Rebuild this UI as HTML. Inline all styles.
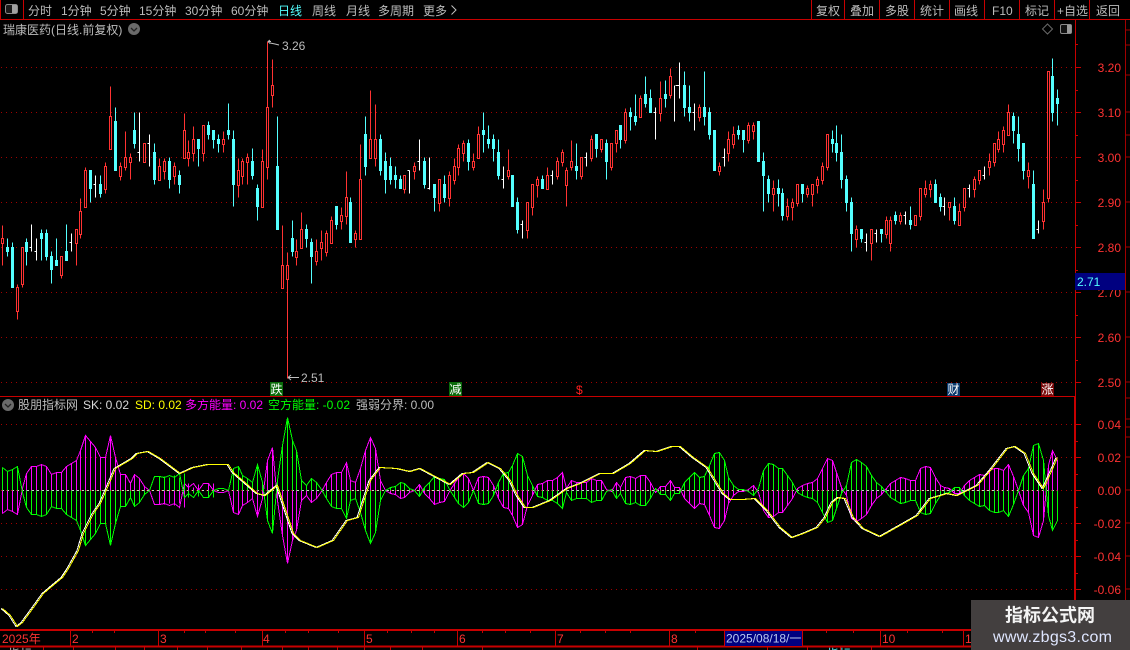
<!DOCTYPE html>
<html><head><meta charset="utf-8"><style>
html,body{margin:0;padding:0;background:#000;width:1130px;height:650px;overflow:hidden}
svg{display:block}
text{font-family:"Liberation Sans","Noto Sans CJK SC",sans-serif;font-size:12px;fill:#bcbcbc}
.r{fill:#ff3232;text-anchor:end}
.a{fill:#ff3232}
</style></head><body>
<svg width="1130" height="650" viewBox="0 0 1130 650" xmlns="http://www.w3.org/2000/svg">
<rect width="1130" height="650" fill="#000"/>
<g shape-rendering="crispEdges">
<!-- grid -->
<path stroke="#a00000" stroke-dasharray="1 4" fill="none" d="M1 67.5H1075M1 112.5H1075M1 157.5H1075M1 202.5H1075M1 247.5H1075M1 292.5H1075M1 337.5H1075M1 382.5H1075M1 424.5H1075M1 457.5H1075M1 490.5H1075M1 523.5H1075M1 556.5H1075M1 589.5H1075"/>
<path stroke="#c0d8c0" stroke-dasharray="2 3" fill="none" d="M2 490.5H1058"/>
<g transform="translate(.5 .5)" fill="none">
<!-- red wicks -->
<path stroke="#ff3232" d="M2 225V265M17 284V319M22 247V287M61 256V278M76 229V265M80 198V238M85 167V207M105 162V193M110 86V149M120 162V180M125 131V170M130 153V179M144 143V162M159 158V180M164 158V179M174 162V184M184 113V158M188 140V166M193 126V161M203 125V161M223 131V152M238 158V197M242 158V184M247 153V184M262 149V207M267 41V179M272 59V107M282 225V288M287 252V378M296 239V265M301 212V248M316 239V265M321 230V260M326 230V256M331 216V243M341 207V229M346 171V224M355 230V247M360 144V239M370 90V158M375 104V166M404 175V193M414 162V179M439 179V211M449 171V206M454 158V184M458 144V175M463 140V161M473 153V170M478 126V158M508 149V179M527 202V238M532 184V215M537 176V197M547 167V189M557 157V179M562 149V166M566 167V206M571 140V170M581 157V179M591 135V161M601 139V152M611 143V170M616 130V152M625 108V143M640 95V117M660 81V121M670 68V98M699 104V121M719 162V175M728 131V161M733 126V148M748 122V143M753 122V139M773 180V211M787 198V220M792 198V220M797 184V206M807 185V197M812 184V206M817 176V193M822 162V184M827 134V170M856 225V247M871 229V260M886 216V238M890 216V251M900 212V224M915 215V225M920 188V220M925 180V197M930 180V197M949 202V220M959 203V225M964 188V211M974 176V197M979 170V184M989 153V175M994 143V166M998 131V152M1003 126V152M1008 104V135M1028 162V188M1043 189V229M1048 71V202"/>
<!-- red bodies -->
<path stroke="#ff3232" fill="#000" d="M1 238h2V243h-2zM16 287h2V311h-2zM21 247h2V284h-2zM60 256h2V275h-2zM75 229h2V243h-2zM79 211h2V234h-2zM84 170h2V207h-2zM104 166h2V189h-2zM109 116h2V149h-2zM119 166h2V176h-2zM124 157h2V167h-2zM129 157h2V162h-2zM143 143h2V162h-2zM158 166h2V180h-2zM163 161h2V171h-2zM173 166h2V176h-2zM183 130h2V158h-2zM187 152h2V158h-2zM192 139h2V153h-2zM202 125h2V153h-2zM222 139h2V144h-2zM237 170h2V185h-2zM241 161h2V176h-2zM246 157h2V162h-2zM261 161h2V207h-2zM266 107h2V167h-2zM271 85h2V95h-2zM281 265h2V288h-2zM286 265h2V279h-2zM295 251h2V257h-2zM300 229h2V248h-2zM315 251h2V261h-2zM320 242h2V248h-2zM325 233h2V252h-2zM330 220h2V243h-2zM340 215h2V221h-2zM345 197h2V216h-2zM354 233h2V239h-2zM359 179h2V239h-2zM369 139h2V158h-2zM374 139h2V158h-2zM403 175h2V189h-2zM413 166h2V171h-2zM438 179h2V203h-2zM448 175h2V198h-2zM453 166h2V180h-2zM457 148h2V167h-2zM462 143h2V153h-2zM472 161h2V167h-2zM477 134h2V158h-2zM507 170h2V176h-2zM526 202h2V230h-2zM531 184h2V207h-2zM536 179h2V185h-2zM546 175h2V189h-2zM556 161h2V176h-2zM561 152h2V162h-2zM565 170h2V185h-2zM570 161h2V167h-2zM580 157h2V176h-2zM590 139h2V158h-2zM600 139h2V149h-2zM610 143h2V167h-2zM615 130h2V143h-2zM624 112h2V140h-2zM639 98h2V117h-2zM659 98h2V113h-2zM669 76h2V95h-2zM698 107h2V117h-2zM718 166h2V171h-2zM727 139h2V153h-2zM732 134h2V144h-2zM747 125h2V140h-2zM752 125h2V131h-2zM772 188h2V194h-2zM786 206h2V216h-2zM791 202h2V207h-2zM796 184h2V203h-2zM806 188h2V194h-2zM811 184h2V194h-2zM816 179h2V185h-2zM821 166h2V180h-2zM826 134h2V167h-2zM855 229h2V239h-2zM870 229h2V243h-2zM885 220h2V234h-2zM889 220h2V243h-2zM899 215h2V221h-2zM914 215h2V225h-2zM919 188h2V216h-2zM924 188h2V194h-2zM929 184h2V189h-2zM948 202h2V207h-2zM958 211h2V225h-2zM963 188h2V207h-2zM973 179h2V189h-2zM978 170h2V180h-2zM988 161h2V167h-2zM993 143h2V162h-2zM997 139h2V149h-2zM1002 130h2V144h-2zM1007 112h2V135h-2zM1027 170h2V176h-2zM1042 202h2V221h-2zM1047 71h2V198h-2z"/>
<!-- cyan wicks -->
<path stroke="#54ffff" d="M7 238V256M12 242V287M26 238V265M41 229V260M46 229V260M51 251V283M56 238V265M66 224V260M90 170V202M100 175V197M115 107V170M134 112V148M154 143V184M169 157V188M179 170V193M198 139V166M208 121V139M213 130V148M218 134V152M228 103V139M233 130V206M252 148V179M257 184V220M277 116V229M292 220V256M306 224V247M311 238V283M336 206V229M350 197V242M365 116V175M380 134V175M385 152V193M390 157V184M395 166V188M400 175V188M424 157V188M434 184V211M444 175V202M468 139V170M483 112V152M488 125V148M493 134V161M498 139V179M512 175V206M517 197V233M542 175V188M576 143V179M596 134V157M606 139V179M620 125V148M630 107V130M635 94V125M645 76V107M650 89V112M665 80V107M684 71V116M689 85V121M704 71V125M709 107V139M714 130V170M738 125V139M743 130V152M758 121V161M763 152V211M768 175V202M778 179V206M782 188V220M802 184V202M832 130V152M836 125V161M841 134V188M846 175V211M851 197V251M861 229V242M881 229V242M895 211V224M910 206V229M935 179V202M940 193V211M954 197V224M1013 112V143M1018 116V161M1023 143V179M1033 170V238M1052 58V121M1057 89V125"/>
<!-- cyan bodies -->
<path stroke="#54ffff" fill="#54ffff" d="M6 247h2V251h-2zM11 247h2V287h-2zM25 242h2V251h-2zM40 233h2V238h-2zM45 233h2V256h-2zM50 256h2V269h-2zM55 260h2V265h-2zM65 251h2V260h-2zM89 170h2V188h-2zM99 184h2V193h-2zM114 121h2V170h-2zM133 130h2V143h-2zM153 152h2V179h-2zM168 161h2V179h-2zM178 175h2V184h-2zM197 139h2V148h-2zM207 125h2V134h-2zM212 130h2V139h-2zM217 139h2V143h-2zM227 130h2V134h-2zM232 139h2V184h-2zM251 161h2V175h-2zM256 188h2V206h-2zM276 166h2V229h-2zM291 238h2V251h-2zM305 229h2V238h-2zM310 242h2V256h-2zM335 206h2V224h-2zM349 202h2V242h-2zM364 134h2V166h-2zM379 139h2V170h-2zM384 161h2V179h-2zM389 166h2V179h-2zM394 175h2V179h-2zM399 179h2V188h-2zM423 161h2V184h-2zM433 184h2V197h-2zM443 184h2V197h-2zM467 143h2V161h-2zM482 130h2V134h-2zM487 139h2V143h-2zM492 139h2V148h-2zM497 152h2V175h-2zM511 175h2V206h-2zM516 202h2V229h-2zM541 179h2V188h-2zM575 166h2V170h-2zM595 134h2V148h-2zM605 143h2V161h-2zM619 125h2V139h-2zM629 112h2V116h-2zM634 116h2V121h-2zM644 94h2V103h-2zM649 98h2V112h-2zM664 94h2V98h-2zM683 85h2V107h-2zM688 107h2V112h-2zM703 107h2V116h-2zM708 112h2V134h-2zM713 130h2V170h-2zM737 130h2V134h-2zM742 130h2V139h-2zM757 121h2V161h-2zM762 161h2V175h-2zM767 179h2V193h-2zM777 188h2V193h-2zM781 193h2V215h-2zM801 184h2V193h-2zM831 139h2V143h-2zM835 143h2V152h-2zM840 152h2V179h-2zM845 179h2V202h-2zM850 202h2V233h-2zM860 229h2V238h-2zM880 229h2V233h-2zM894 215h2V220h-2zM909 220h2V224h-2zM934 184h2V202h-2zM939 197h2V206h-2zM953 206h2V220h-2zM1012 116h2V130h-2zM1017 134h2V148h-2zM1022 143h2V170h-2zM1032 184h2V238h-2zM1051 76h2V112h-2zM1056 98h2V103h-2z"/>
<!-- white doji -->
<path stroke="#fff" d="M31 224V251M29 247h2M36 238V260M34 251h2M71 233V251M69 242h2M95 175V197M93 184h2M139 112V161M137 152h2M149 134V166M147 143h2M409 170V193M407 170h2M419 139V170M417 161h2M429 157V189M427 188h2M503 166V188M501 179h2M522 220V238M520 224h2M552 170V184M550 175h2M586 152V166M584 157h2M655 107V139M653 112h2M674 85V121M675 85h2M679 62V98M677 85h2M694 103V130M692 112h2M724 148V166M722 157h2M866 233V251M864 242h2M876 229V242M874 233h2M905 211V224M903 215h2M944 197V215M942 206h2M969 184V197M967 188h2M984 166V179M982 175h2M1038 220V233M1036 229h2"/>
</g>
</g>

<!-- indicator bars -->
<defs>
<g id="m" fill="none" stroke-width="1">
<path d="M2 490V513M7 490V509M12 490V511M17 490V514M22 490V488M26 490V473M31 490V466M36 490V466M41 490V464M46 490V466M51 490V474M56 490V472M61 490V472M66 490V466M71 490V463M76 490V460M80 490V450M85 490V435M90 490V441M95 490V447M100 490V457M105 490V457M110 490V435M115 490V457M120 490V474M125 490V474M130 490V483M134 490V474M139 490V478M144 490V486M159 490V504M164 490V504M169 490V503M174 490V505M179 490V503M184 490V507M188 490V483M193 490V487M198 490V484M208 490V483M213 490V483M233 490V512M238 490V514M242 490V505M247 490V502M252 490V498M257 490V516M262 490V498M267 490V460M272 490V447M277 490V500M282 490V535M287 490V563M292 490V540M296 490V530M301 490V500M306 490V495M311 490V502M316 490V498M326 490V482M331 490V474M336 490V472M341 490V472M346 490V462M350 490V480M355 490V482M360 490V468M365 490V450M370 490V437M375 490V448M380 490V480M390 490V493M395 490V494M400 490V498M404 490V497M409 490V492M419 490V484M424 490V493M429 490V498M434 490V504M439 490V502M444 490V501M454 490V483M458 490V477M463 490V473M468 490V478M478 490V477M483 490V476M488 490V477M493 490V485M498 490V498M503 490V507M508 490V508M512 490V515M517 490V527M522 490V524M527 490V505M532 490V495M537 490V484M542 490V483M547 490V480M552 490V480M557 490V477M562 490V472M566 490V488M571 490V480M576 490V482M581 490V482M586 490V482M591 490V478M596 490V480M601 490V480M616 490V482M620 490V487M625 490V477M630 490V476M635 490V478M640 490V475M645 490V475M650 490V482M660 490V486M665 490V486M670 490V480M674 490V487M679 490V487M684 490V498M689 490V503M694 490V508M699 490V503M704 490V504M709 490V515M714 490V527M719 490V528M724 490V520M728 490V503M733 490V495M748 490V489M753 490V485M763 490V510M768 490V517M773 490V516M778 490V512M782 490V512M787 490V505M792 490V498M797 490V488M802 490V485M807 490V483M812 490V482M817 490V478M822 490V468M827 490V458M832 490V460M836 490V472M841 490V487M846 490V495M851 490V518M856 490V521M861 490V518M866 490V514M871 490V505M876 490V498M881 490V494M886 490V488M890 490V483M895 490V480M900 490V477M905 490V478M910 490V480M915 490V480M920 490V468M925 490V466M930 490V467M935 490V477M940 490V485M944 490V487M949 490V488M954 490V493M959 490V493M964 490V485M969 490V480M974 490V477M979 490V474M984 490V475M989 490V470M994 490V468M998 490V468M1003 490V470M1008 490V464M1013 490V476M1023 490V505M1028 490V512M1033 490V535M1038 490V537M1043 490V520M1048 490V465M1052 490V450M1057 490V460"/>
<polyline points="2,513 7,509 12,511 17,514 22,488 26,473 31,466 36,466 41,464 46,466 51,474 56,472 61,472 66,466 71,463 76,460 80,450 85,435 90,441 95,447 100,457 105,457 110,435 115,457 120,474 125,474 130,483 134,474 139,478 144,486 149,490 154,504 159,504 164,503 169,505 174,503 179,507 184,483 188,487 193,483 198,490 203,483 208,483 213,490 218,492 223,492 228,490 233,512 238,514 242,505 247,502 252,498 257,516 262,498 267,460 272,447 277,500 282,535 287,563 292,540 296,530 301,500 306,495 311,502 316,498 321,491 326,482 331,474 336,472 341,472 346,462 350,480 355,482 360,468 365,450 370,437 375,448 380,480 385,490 390,493 395,494 400,498 404,497 409,492 414,490 419,484 424,493 429,498 434,504 439,502 444,501 449,491 454,483 458,477 463,473 468,478 473,490 478,477 483,476 488,477 493,485 498,498 503,507 508,508 512,515 517,527 522,524 527,505 532,495 537,484 542,483 547,480 552,480 557,477 562,472 566,488 571,480 576,482 581,482 586,482 591,478 596,480 601,480 606,489 611,491 616,482 620,487 625,477 630,476 635,478 640,475 645,475 650,482 655,492 660,486 665,486 670,480 674,487 679,487 684,498 689,503 694,508 699,503 704,504 709,515 714,527 719,528 724,520 728,503 733,495 738,491 743,491 748,489 753,485 758,492 763,510 768,517 773,516 778,512 782,512 787,505 792,498 797,488 802,485 807,483 812,482 817,478 822,468 827,458 832,460 836,472 841,487 846,495 851,518 856,521 861,518 866,514 871,505 876,498 881,494 886,488 890,483 895,480 900,477 905,478 910,480 915,480 920,468 925,466 930,467 935,477 940,485 944,487 949,488 954,493 959,493 964,485 969,480 974,477 979,474 984,475 989,470 994,468 998,468 1003,470 1008,464 1013,476 1018,490 1023,505 1028,512 1033,535 1038,537 1043,520 1048,465 1052,450 1057,460"/>
</g>
</defs>
<g transform="translate(.5 .5)" shape-rendering="crispEdges">
<use href="#m" stroke="#ff00ff"/>
<use href="#m" stroke="#00ff00" transform="matrix(1 0 0 -1 0 980)"/>
</g>

<!-- SK / SD -->
<g fill="none" shape-rendering="crispEdges">
<polyline transform="translate(-1 .5)" stroke="#fff" points="2,608 10,615 17,626 22,622 33,607 43,593 50,587 62,577 68,568 78,550 83,533 93,513 100,503 107,487 115,468 132,458 137,453 148,451 160,458 180,473 193,467 208,464 228,464 233,472 257,493 265,495 277,485 283,503 293,533 300,540 317,547 333,540 347,520 358,517 370,480 380,467 397,468 410,471 420,468 433,475 450,484 463,473 473,472 488,462 500,468 510,480 517,495 525,507 533,507 550,500 567,488 580,483 600,473 613,473 630,463 645,450 657,451 672,446 680,446 693,457 707,467 715,480 723,493 730,499 743,499 755,498 767,510 780,527 792,537 803,533 817,527 825,517 832,502 838,497 845,498 853,517 863,528 880,536 903,523 917,515 930,498 947,493 957,495 977,485 990,470 1007,448 1015,446 1025,453 1033,473 1043,488 1050,473 1057,457"/>
<polyline transform="translate(.5 .5)" stroke="#ffff00" points="2,608 10,615 17,626 22,622 33,607 43,593 50,587 62,577 68,568 78,550 83,533 93,513 100,503 107,487 115,468 132,458 137,453 148,451 160,458 180,473 193,467 208,464 228,464 233,472 257,493 265,495 277,485 283,503 293,533 300,540 317,547 333,540 347,520 358,517 370,480 380,467 397,468 410,471 420,468 433,475 450,484 463,473 473,472 488,462 500,468 510,480 517,495 525,507 533,507 550,500 567,488 580,483 600,473 613,473 630,463 645,450 657,451 672,446 680,446 693,457 707,467 715,480 723,493 730,499 743,499 755,498 767,510 780,527 792,537 803,533 817,527 825,517 832,502 838,497 845,498 853,517 863,528 880,536 903,523 917,515 930,498 947,493 957,495 977,485 990,470 1007,448 1015,446 1025,453 1033,473 1043,488 1050,473 1057,457"/>
</g>

<!-- frame -->
<g shape-rendering="crispEdges" fill="none" stroke="#c80000">
<path d="M0 19.5H1130M0.5 0V19M23.5 0V19M811.5 0V19M844.5 0V19M879.5 0V19M914.5 0V19M949.5 0V19M984.5 0V19M1019.5 0V19M1054.5 0V19M1089.5 0V19M0 396.5H1075M1075.5 19V630"/>
<path stroke-width="2" d="M1075 397V646"/>
<path stroke-width="2" d="M0 630H971M0 646.5H971" />
<path stroke="#c80000" d="M1075 67.5h6M1075 112.5h6M1075 157.5h6M1075 202.5h6M1075 247.5h6M1075 292.5h6M1075 337.5h6M1075 382.5h6M1075 90.5h3M1075 135.5h3M1075 180.5h3M1075 225.5h3M1075 270.5h3M1075 315.5h3M1075 360.5h3M1075 44.5h3M1075 424.5h6M1075 457.5h6M1075 490.5h6M1075 523.5h6M1075 556.5h6M1075 589.5h6M1075 441.5h3M1075 474.5h3M1075 507.5h3M1075 540.5h3M1075 573.5h3M1075 606.5h3"/>
<path stroke="#a00000" d="M1125.5 20V600M1125 30h5M1125 45h5M1125 75h5M1125 112h5M1125 135h5M1125 157h5M1125 202h5M1125 247h5M1125 292h5M1125 337h5M1125 382h5M1125 398h5M1125 419h5M1125 427h5M1125 437h5M1125 457h5M1125 490h5M1125 523h5M1125 556h5M1125 589h5"/>
<path d="M70.5 630V646M158.5 630V646M262.5 630V646M364.5 630V646M457.5 630V646M555.5 630V646M669.5 630V646M724.5 630V646M802.5 630V646M880.5 630V646M963.5 630V646M92.5 630v3M114.5 630v3M184.5 630v3M205.5 630v3M235.5 630v3M285.5 630v3M308.5 630v3M338.5 630v3M387.5 630v3M411.5 630v3M434.5 630v3M482.5 630v3M505.5 630v3M530.5 630v3M580.5 630v3M605.5 630v3M630.5 630v3M695.5 630v3M826.5 630v3M853.5 630v3M907.5 630v3M942.5 630v3"/>
<path d="M43.5 646V650M73.5 646V650M115.5 646V650M144.5 646V650M177.5 646V650M207.5 646V650M241.5 646V650M282.5 646V650M308.5 646V650M337.5 646V650M364.5 646V650M390.5 646V650M422.5 646V650M482.5 646V650M697.5 646V650M767.5 646V650M807.5 646V650M840.5 646V650M871.5 646V650"/>
</g>

<!-- toolbar -->
<rect x="5.5" y="4.5" width="12" height="9" rx="2" fill="#1a1a1a" stroke="#8a8a8a"/><rect x="12" y="5" width="5" height="8" fill="#a0a0a0"/>
<text x="28" y="15">分时</text><text x="61" y="15">1分钟</text><text x="100" y="15">5分钟</text><text x="139" y="15">15分钟</text><text x="185" y="15">30分钟</text><text x="231" y="15">60分钟</text>
<text x="278" y="15" style="fill:#54ffff">日线</text><text x="312" y="15">周线</text><text x="346" y="15">月线</text><text x="378" y="15">多周期</text><text x="423" y="15">更多</text>
<path d="M451.5 5.5l4.5 4.5-4.5 4.5" fill="none" stroke="#c0c0c0"/>
<text x="816" y="15">复权</text><text x="850" y="15">叠加</text><text x="885" y="15">多股</text><text x="920" y="15">统计</text><text x="954" y="15">画线</text><text x="992" y="15">F10</text><text x="1025" y="15">标记</text><text x="1057" y="15">+自选</text><text x="1096" y="15">返回</text>

<!-- title -->
<text x="3" y="34">瑞康医药(日线.前复权)</text>
<circle cx="134" cy="29" r="6" fill="#6a6a6a"/><path d="M131 28l3 3 3-3" fill="none" stroke="#222" stroke-width="1.3"/>
<path d="M1047.5 24l5 5-5 5-5-5z" fill="none" stroke="#6a6a6a"/>
<rect x="1060.5" y="24.5" width="11" height="9" rx="1.5" fill="#111" stroke="#8a8a8a"/><rect x="1067" y="25" width="4" height="8" fill="#9a9a9a"/>

<!-- extremes -->
<path d="M268 41.5h3M268 41.5l2-1.5M268 41.5l2 2M270 43l5 1 4 1" fill="none" stroke="#c0c0c0"/>
<text x="282" y="50">3.26</text>
<path d="M288 377.5h11M288 377.5l3-2.5M288 377.5l3 2.5" fill="none" stroke="#c0c0c0"/>
<text x="301" y="382">2.51</text>

<!-- markers -->
<rect x="270" y="382" width="13" height="14" fill="#0a6b0a"/><text x="270.5" y="393.5" style="fill:#fff">跌</text>
<rect x="449" y="382" width="13" height="14" fill="#0a6b0a"/><text x="449.5" y="393.5" style="fill:#fff">减</text>
<text x="576" y="394" style="fill:#ff2020">$</text>
<rect x="947" y="383" width="13" height="13" fill="#0a3a6e"/><text x="947.5" y="393.5" style="fill:#fff">财</text>
<rect x="1041" y="383" width="13" height="13" fill="#7a0a0a"/><text x="1041.5" y="393.5" style="fill:#fff">涨</text>

<!-- indicator title -->
<circle cx="8" cy="405" r="6" fill="#6a6a6a"/><path d="M5 404l3 3 3-3" fill="none" stroke="#222" stroke-width="1.3"/>
<text x="18" y="409">股朋指标网</text>
<text x="83" y="409" style="fill:#d8d8d8">SK: 0.02</text>
<text x="135" y="409" style="fill:#ffff00">SD: 0.02</text>
<text x="185" y="409" style="fill:#ff00ff">多方能量: 0.02</text>
<text x="268" y="409" style="fill:#00ff00">空方能量: -0.02</text>
<text x="356" y="409">强弱分界: 0.00</text>

<!-- price axis -->
<text class="r" x="1121" y="72">3.20</text><text class="r" x="1121" y="117">3.10</text><text class="r" x="1121" y="162">3.00</text><text class="r" x="1121" y="207">2.90</text><text class="r" x="1121" y="252">2.80</text><text class="r" x="1121" y="297">2.70</text><text class="r" x="1121" y="342">2.60</text><text class="r" x="1121" y="387">2.50</text>
<rect x="1075" y="273" width="50" height="17" fill="#000080"/><text x="1077" y="286" style="fill:#54ffff">2.71</text>
<text class="r" x="1121" y="429">0.04</text><text class="r" x="1121" y="462">0.02</text><text class="r" x="1121" y="495">0.00</text><text class="r" x="1121" y="528">-0.02</text><text class="r" x="1121" y="561">-0.04</text><text class="r" x="1121" y="594">-0.06</text>

<!-- date axis -->
<text class="a" x="2" y="643">2025年</text><text class="a" x="72" y="643">2</text><text class="a" x="160" y="643">3</text><text class="a" x="263" y="643">4</text><text class="a" x="366" y="643">5</text><text class="a" x="459" y="643">6</text><text class="a" x="557" y="643">7</text><text class="a" x="671" y="643">8</text><text class="a" x="882" y="643">10</text><text class="a" x="965" y="643">1</text>
<rect x="725" y="631" width="77" height="15" fill="#000080"/><text x="726" y="642.5" style="fill:#b8c8f0">2025/08/18/一</text>
<text x="8" y="658">指标</text><text x="827" y="658" style="fill:#54ffff">指标</text>

<!-- watermark -->
<rect x="971" y="600" width="159" height="50" fill="#433f3f"/>
<text x="1005" y="621.5" style="font-size:18px;font-weight:bold;fill:#f4f4f4">指标公式网</text>
<text x="993" y="642" textLength="119" style="font-size:16px;fill:#dfe6ff">www.zbgs3.com</text>
</svg>
</body></html>
